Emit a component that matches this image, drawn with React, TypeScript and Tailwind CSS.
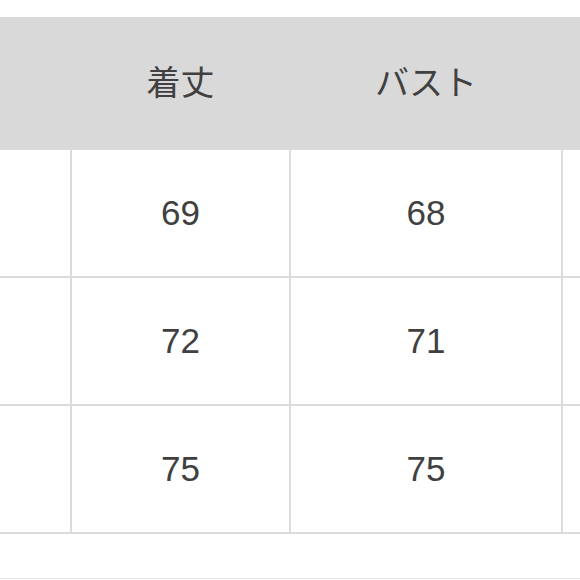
import React from 'react'

const rows = [
  ['69', '68'],
  ['72', '71'],
  ['75', '75'],
]

function App() {
  return (
    <div className="w-[580px] h-[580px] overflow-hidden bg-white pt-[17px] text-[#404040]" style={{ fontFamily: '"Liberation Sans", "Noto Sans CJK JP", sans-serif' }}>
      {/* header */}
      <div className="grid grid-cols-[70px_217px_270px_1fr] gap-x-[2px] h-[133px] bg-[#d9d9d9] pb-[7px]">
        <div></div>
        <div className="flex items-center justify-center text-[34px] font-['Noto_Sans_CJK_JP',sans-serif]">着丈</div>
        <div className="flex items-center justify-center text-[34px] font-['Noto_Sans_CJK_JP',sans-serif]">バスト</div>
        <div></div>
      </div>

      {/* body */}
      <div className="grid grid-cols-[70px_217px_270px_1fr] gap-x-[2px] gap-y-[2px] bg-[#dcdcdc] pb-[2px]">
        {rows.map((r, i) => (
          <React.Fragment key={i}>
            <div className="bg-white h-[126px]"></div>
            <div className="bg-white h-[126px] flex items-center justify-center text-[35px]">{r[0]}</div>
            <div className="bg-white h-[126px] flex items-center justify-center text-[35px]">{r[1]}</div>
            <div className="bg-white h-[126px]"></div>
          </React.Fragment>
        ))}
      </div>

      <div className="mt-[44px] border-t border-[#e4e4e4]"></div>
    </div>
  )
}

export default App
